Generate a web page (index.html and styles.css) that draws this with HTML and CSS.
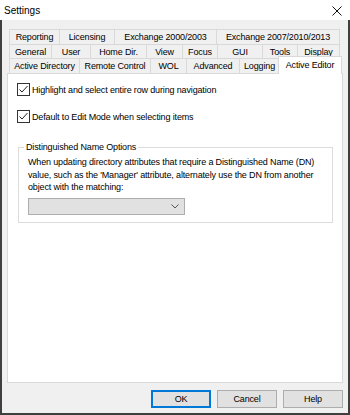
FILE: index.html
```html
<!DOCTYPE html>
<html>
<head>
    <title>Settings</title>
    <link rel="stylesheet" href="styles.css">
</head>
<body>
    <div class="window">
        <div class="titlebar">
            <span>Settings</span>
            <svg class="close" width="10" height="10" viewBox="0 0 10 10">
                <path d="M0.5 0.5 L9.5 9.5 M9.5 0.5 L0.5 9.5" stroke="#111" stroke-width="1" fill="none"/>
            </svg>
        </div>

        <div class="frame">
            <div class="tabs">
                <div class="tab-row row1">
                    <div class="tab">Reporting</div>
                    <div class="tab">Licensing</div>
                    <div class="tab">Exchange 2000/2003</div>
                    <div class="tab">Exchange 2007/2010/2013</div>
                </div>
                <div class="tab-row row2">
                    <div class="tab">General</div>
                    <div class="tab">User</div>
                    <div class="tab">Home Dir.</div>
                    <div class="tab">View</div>
                    <div class="tab">Focus</div>
                    <div class="tab">GUI</div>
                    <div class="tab">Tools</div>
                    <div class="tab">Display</div>
                </div>
                <div class="tab-row row3">
                    <div class="tab">Active Directory</div>
                    <div class="tab">Remote Control</div>
                    <div class="tab">WOL</div>
                    <div class="tab">Advanced</div>
                    <div class="tab">Logging</div>
                    <div class="tab selected">Active Editor</div>
                </div>
            </div>

            <div class="page">
                <label class="check">
                    <span class="box">
                        <svg width="11" height="11" viewBox="0 0 11 11"><path d="M1.5 5.5 L4 8 L9.5 2" stroke="#222" stroke-width="1" fill="none"/></svg>
                    </span>
                    Highlight and select entire row during navigation
                </label>
                <label class="check">
                    <span class="box">
                        <svg width="11" height="11" viewBox="0 0 11 11"><path d="M1.5 5.5 L4 8 L9.5 2" stroke="#222" stroke-width="1" fill="none"/></svg>
                    </span>
                    Default to Edit Mode when selecting items
                </label>

                <fieldset class="group">
                    <legend>Distinguished Name Options</legend>
                    <p>When updating directory attributes that require a Distinguished Name (DN) value, such as the 'Manager' attribute, alternately use the DN from another object with the matching:</p>
                    <div class="select">
                        <svg width="8" height="5" viewBox="0 0 8 5"><path d="M0.5 0.5 L4 4 L7.5 0.5" stroke="#555" stroke-width="1" fill="none"/></svg>
                    </div>
                </fieldset>
            </div>

            <div class="buttons">
                <button class="default">OK</button>
                <button>Cancel</button>
                <button>Help</button>
            </div>
        </div>
    </div>
</body>
</html>
```

FILE: styles.css
```css
body {
    margin: 0;
    font-family: "Liberation Sans", Arial, sans-serif;
    font-size: 9px;
    letter-spacing: -0.15px;
    color: #000;
    background: #fff;
}
.window {
    width: 350px;
    height: 415px;
    display: flex;
    flex-direction: column;
}
.titlebar {
    height: 20px;
    flex: none;
    display: flex;
    align-items: center;
    justify-content: space-between;
    padding: 1px 8px 0 4px;
    background: #fff;
    font-size: 10px;
    letter-spacing: 0;
}
.frame {
    flex: 1;
    display: flex;
    flex-direction: column;
    background: #f0f0f0;
    border: 2px solid #3f3f3f;
    border-top: none;
    padding: 9px 5px 0 5px;
}

/* tabs */
.tabs { padding: 0 2px; }
.tab-row { display: grid; height: 15px; }
.row1 { grid-template-columns: 51px 55px 102px 123px; }
.row2 { grid-template-columns: 43px 39px 56px 36px 35px 45px 35px 42px; height: 14px; }
.row3 { grid-template-columns: 71px 71px 36px 53px 40px 60px; }
.tab {
    display: flex;
    align-items: center;
    justify-content: center;
    white-space: nowrap;
    border-top: 1px solid #d9d9d9;
    border-right: 1px solid #d9d9d9;
}
.tab:first-child { border-left: 1px solid #d9d9d9; }
.tab.selected {
    position: relative;
    z-index: 1;
    margin: -2px -2px -1px -2px;
    background: #fff;
    border-left: 1px solid #d9d9d9;
    padding-bottom: 1px;
}

/* page */
.page {
    height: 310px;
    background: #fff;
    border: 1px solid #d9d9d9;
    padding: 9px;
}
.check {
    display: flex;
    align-items: center;
    gap: 2px;
    height: 13px;
}
.check + .check { margin-top: 14px; }
.box {
    width: 13px;
    height: 13px;
    border: 1px solid #333;
    background: #fff;
    display: flex;
}
.group {
    width: 315px;
    margin: 18px 0 0 1px;
    border: 1px solid #dcdcdc;
    padding: 3px 9px 7px 9px;
}
.group legend {
    padding: 0 2px;
    margin-left: -4px;
    line-height: 12px;
}
.group p {
    margin: 0;
    line-height: 12.5px;
}
.select {
    margin-top: 4px;
    width: 157px;
    height: 17px;
    background: #e1e1e1;
    border: 1px solid #adadad;
    display: flex;
    justify-content: flex-end;
    align-items: center;
    padding-right: 5px;
}

/* buttons */
.buttons {
    display: flex;
    justify-content: flex-end;
    gap: 6px;
    margin-top: 7px;
}
button {
    width: 60px;
    height: 18px;
    padding: 0;
    font-family: inherit;
    font-size: 9px;
    letter-spacing: inherit;
    color: #000;
    background: #e1e1e1;
    border: 1px solid #adadad;
}
button.default { border: 2px solid #0078d7; }

*, *::before, *::after { box-sizing: border-box; }
```
